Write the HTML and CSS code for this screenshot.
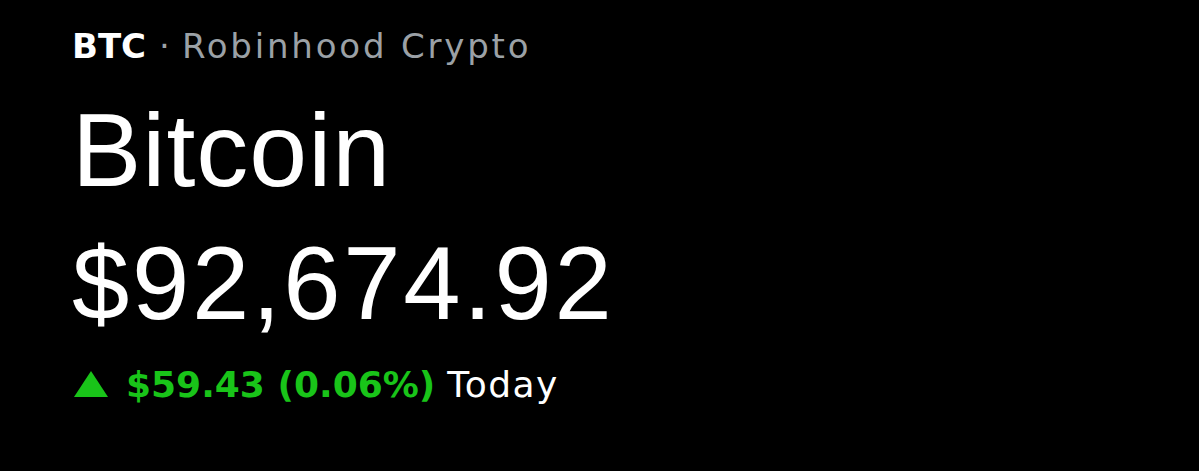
FILE: index.html
```html
<!DOCTYPE html>
<html>
<head>
<meta charset="utf-8">
<link rel="stylesheet" href="styles.css">
</head>
<body>
<main class="quote">
  <div class="meta"><span class="ticker">BTC</span><span class="sep">·</span><span class="source">Robinhood Crypto</span></div>
  <h1 class="name">Bitcoin</h1>
  <div class="price">$92,674.92</div>
  <div class="change">
    <svg class="arrow" width="34" height="26" viewBox="0 0 34 26"><polygon points="17,0 34,26 0,26" fill="#19c419"/></svg>
    <span class="delta">$59.43 (0.06%)</span>
    <span class="period">Today</span>
  </div>
</main>
</body>
</html>
```
FILE: styles.css
```css
html, body {
  margin: 0;
  background: #000;
}
body {
  font-family: "Liberation Sans", Arial, sans-serif;
  color: #fff;
}
.quote {
  display: flex;
  flex-direction: column;
  padding: 26px 0 0 72px;
}
.meta {
  font-family: "DejaVu Sans", sans-serif;
  font-size: 34px;
  line-height: 40px;
  display: flex;
  align-items: baseline;
}
.ticker {
  font-weight: 700;
  color: #fff;
}
.sep {
  color: #9ba1a6;
  margin: 0 12px 0 13px;
}
.source {
  color: #9ba1a6;
  letter-spacing: 2.8px;
}
.name {
  margin: 32px 0 0;
  font-size: 104px;
  line-height: 104px;
  font-weight: 400;
  letter-spacing: 1px;
}
.price {
  margin-top: 33px;
  font-size: 103px;
  line-height: 98px;
  letter-spacing: 2.7px;
}
.change {
  margin-top: 32px;
  display: flex;
  align-items: baseline;
  font-family: "DejaVu Sans", sans-serif;
  font-size: 36px;
  line-height: 40px;
}
.arrow {
  margin: 0 18px 0 2px;
}
.delta {
  color: #19c419;
  font-weight: 700;
  margin-right: 12px;
}
.period {
  color: #fff;
  letter-spacing: 1.5px;
}
```
